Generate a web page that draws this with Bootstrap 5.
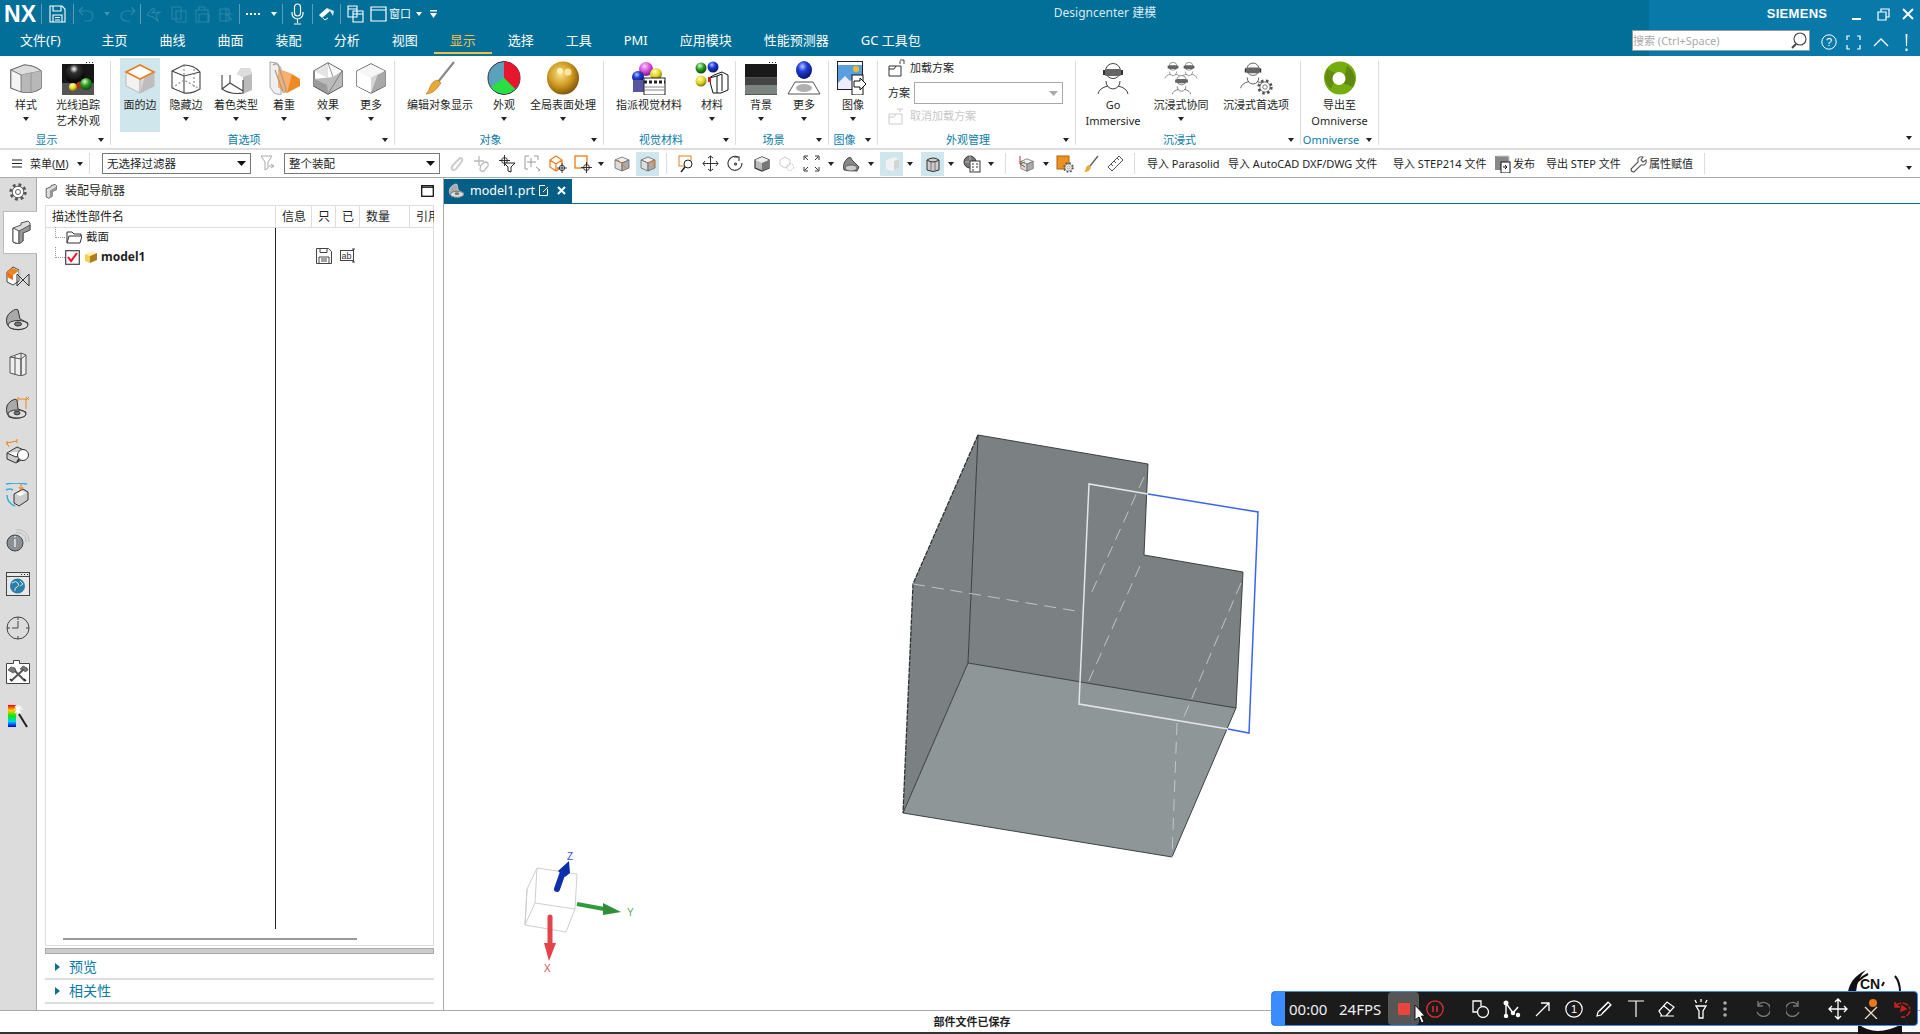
<!DOCTYPE html>
<html lang="zh-CN">
<head>
<meta charset="utf-8">
<title>Designcenter 建模</title>
<link href="https://cdn.jsdelivr.net/npm/bootstrap@5.3.0/dist/css/bootstrap.min.css" rel="stylesheet">
<style>
html,body{margin:0;height:100%;overflow:hidden;background:#fff}
body{font-family:"Noto Sans","Noto Sans CJK SC",sans-serif;font-size:11px;color:#1f1f1f;line-height:16px}
.app{width:1920px;height:1034px}
.cl{display:flex;align-items:center;justify-content:center;flex:none;white-space:nowrap}
.wd2{width:2px}.wd4{width:4px}.wd5{width:5px}.wd6{width:6px}.wd7{width:7px}.wd8{width:8px}.wd9{width:9px}.wd10{width:10px}.wd11{width:11px}.wd12{width:12px}.wd13{width:13px}.wd14{width:14px}.wd15{width:15px}.wd16{width:16px}.wd18{width:18px}.wd19{width:19px}.wd21{width:21px}.wd23{width:23px}.wd24{width:24px}.wd25{width:25px}.wd26{width:26px}.wd27{width:27px}.wd28{width:28px}.wd29{width:29px}.wd30{width:30px}.wd31{width:31px}.wd32{width:32px}.wd33{width:33px}.wd34{width:34px}.wd36{width:36px}.wd37{width:37px}.wd38{width:38px}.wd40{width:40px}.wd41{width:41px}.wd46{width:46px}.wd48{width:48px}.wd49{width:49px}.wd50{width:50px}.wd52{width:52px}.wd55{width:55px}.wd62{width:62px}.wd74{width:74px}.wd77{width:77px}.wd80{width:80px}.wd81{width:81px}.wd84{width:84px}.wd88{width:88px}.wd90{width:90px}.wd101{width:101px}.wd104{width:104px}.wd165{width:165px}.wd609{width:609px}
/* title bar */
.tbar{height:56px;flex:none;color:#fff;background:linear-gradient(90deg,#016f97 1649px,#0879a9 1649px)}
.trow{height:28px}
.nxl{font-family:"Liberation Sans",sans-serif;font-weight:700;font-size:23px;letter-spacing:.2px;justify-content:flex-start;padding-left:4px}
.tsep{width:1px;height:20px;background:#5a9cb8;flex:none}
.crw{width:0;height:0;border-left:3.5px solid transparent;border-right:3.5px solid transparent;border-top:4px solid #fff;display:block}
.crk{width:0;height:0;border-left:3.5px solid transparent;border-right:3.5px solid transparent;border-top:4px solid #222;display:block;flex:none}
.ttl{font-size:12px;color:#d7eaf2;padding-bottom:3px}
.smn{font-family:"Liberation Sans",sans-serif;font-weight:700;font-size:13px;letter-spacing:.3px}
.tabi{padding:0 16px;height:26px;line-height:25px;font-size:13px;color:#fff;white-space:nowrap;flex:none;border-bottom:2px solid transparent;margin-bottom:2px}
.tabi.first{margin-left:4px;padding-right:25px}
.tabi.on{color:#f5c04a;border-bottom-color:#f5c04a}
.srch{width:178px;height:21px;border:1px solid #999;background:#fff;position:relative;flex:none;margin-bottom:3px}
.srch input{border:0;outline:0;border-radius:0;width:100%;height:19px;padding:0;font-size:11px;background:transparent;font-family:inherit;color:#aaa;box-shadow:none}
.srch input::placeholder{color:#aaa}
.srch svg{position:absolute;right:2px;top:1px}
/* ribbon */
.rbn{height:94px;flex:none;border-bottom:2px solid #ddd;background:#fff}
.rgp{display:flex;flex-direction:column;flex:none;height:92px;position:relative;padding-right:1px}
.rgp::after{content:"";position:absolute;right:0;top:5px;width:1px;height:84px;background:#ddd}
.rgi{display:flex;height:76px;padding-top:2px;flex:none}
.rgi.p9{padding-left:9px}
.rbi{display:flex;flex-direction:column;align-items:center;flex:none;padding-top:3px;height:74px;white-space:nowrap;text-align:center}
.rbi svg{flex:none}
.rbi.act{background:#cfe6ec}
.rbl{margin-top:2px;line-height:16px}
.rbi .crk{margin-top:4px}
.rgf{display:flex;align-items:center;height:13px;color:#0b7ba8;margin-top:1.500px;flex:none}
.rgf span{flex:1;text-align:center;white-space:nowrap}
.rgf .crk{flex:none;margin:0 6px 0 5px}
.g7{width:198px}.g1{width:111px}.g2{width:284px}.g3{width:209px}.g4{width:132px}.g5{width:93px}.g6{width:49px}.g8{width:225px}.g9{width:78px}
.schm{padding:2px 0 0 10px;height:76px;flex:none}
.schr{height:20px}
.cmb{width:149px;height:22px;min-height:22px;padding:0 0 0 3px;border:1px solid #aaa;border-radius:0;font-size:11px;background-image:url("data:image/svg+xml,%3Csvg xmlns='http://www.w3.org/2000/svg' width='9' height='5'%3E%3Cpath d='M0 0h9L4.5 5z' fill='%23aaa'/%3E%3C/svg%3E");background-position:right 4px center;background-size:9px 5px;margin-left:4px}
.dis{color:#c8c8c8;margin-top:2px}
/* tool bar */
.tlb{height:28px;flex:none;border-bottom:1px solid #aaa;background:#fff}
.vsp{width:1px;height:21px;background:#ddd;flex:none}
.sel{height:21px;min-height:21px;padding:0 0 0 4px;border:1px solid #777;border-radius:0;font-size:11.5px;color:#222;background-image:url("data:image/svg+xml,%3Csvg xmlns='http://www.w3.org/2000/svg' width='9' height='5'%3E%3Cpath d='M0 0h9L4.5 5z' fill='%23111'/%3E%3C/svg%3E");background-position:right 4px center;background-size:9px 5px;flex:none;box-shadow:none}
.sel1{width:149px;margin-left:12px}.sel2{width:156px}
.hil{background:#cfe6ec;height:24px}
.mnu{padding-left:12px;justify-content:flex-start}
/* main */
.mainw{height:833px;flex:none;border-bottom:1px solid #aaa}
.sdb{width:37px;flex:none;background:#dcdcdc;border-right:1px solid #aaa;height:832px}
.sdi{height:44px;display:flex;align-items:center;justify-content:center}
.sdi.top{height:33px;padding-bottom:5px}
.sdi.act{height:43px;background:#fff;margin-left:3px;margin-right:-1px;border:1px solid #bbb;border-right:0;position:relative;padding-bottom:2px}
.pnl{width:407px;flex:none;border-right:1px solid #aaa;padding:0 9px 0 8px;height:832px}
.phd{height:27px;font-size:12px;padding-bottom:2px}
.tbx{height:741px;border:1px solid #ddd;flex:none}
.thd{height:21px;flex:none;border-bottom:1px solid #ddd;font-size:12px;box-sizing:content-box}
.thc{display:flex;align-items:center;padding-left:6px;border-right:1px solid #ddd;flex:none;overflow:hidden;white-space:nowrap}
.tc0{width:230px}.tc1{width:36px}.tc2{width:24px}.tc3{width:24px}.tc4{width:50px}.tc5{width:24px;border-right:0}
.tbd{height:701px;flex:none}
.tl{width:230px;border-right:1px solid #222;flex:none}
.trw{height:20px;font-size:11.5px;white-space:nowrap}
.trw:first-child{margin-top:-1px}
.dot{width:10px;height:11px;margin-left:9px;align-self:flex-start;border-left:1px dotted #999;border-bottom:1px dotted #999;flex:none}
.mdl{font-weight:700;font-size:12px;margin-left:3px}
.tir{padding:20px 0 0 40px;gap:8px}
.hsb{height:2px;width:294px;background:#999;margin:9px 0 0 17px}
.spl{height:6px;background:#ccc;border:1px solid #aaa;margin:2px 0;flex:none}
.sct{height:22px;padding-left:10px;font-size:14px;color:#0b7ba8;flex:none}
.sct i{width:0;height:0;border-top:4.5px solid transparent;border-bottom:4.5px solid transparent;border-left:5px solid #0a6f96;margin-right:9px;display:block}
.sln{height:2px;background:#ddd;flex:none}
.vwp{flex:1;min-width:0;height:832px}
.vtb{height:26px;flex:none;border-bottom:1px solid #046b95;padding-top:1px}
.vtab{width:128px;height:25px;background:#045e85;color:#fff;font-size:12.5px;padding-bottom:2px}
.cvs{display:block;flex:none}
.stbar{height:21px;flex:none;font-weight:700;padding-left:24px;background:#fff}
.btl{height:2px;background:#333;flex:none}
/* recorder */
.ink{position:absolute;left:1840px;top:962px}
.rec{position:absolute;left:1271px;top:991px;width:647px;height:35px;background:#1b1b1b;border:1px solid #3a8cff;border-radius:4px;color:#eee;font-size:15px}
.rbs{height:100%;background:#3a8cff;border-radius:3px 0 0 3px}
.rhl{height:33px;background:#565656;border-radius:4px}
.cur{position:absolute;left:1414px;top:1004px}
</style>
</head>
<body>
<svg width="0" height="0" class="position-absolute">
<defs>
<radialGradient id="gold" cx=".42" cy=".38" r=".65"><stop offset="0" stop-color="#f8e48c"/><stop offset=".55" stop-color="#d09a20"/><stop offset="1" stop-color="#7c5208"/></radialGradient>
<radialGradient id="blu" cx=".4" cy=".3" r=".7"><stop offset="0" stop-color="#b8c8ff"/><stop offset=".4" stop-color="#2040d8"/><stop offset="1" stop-color="#081070"/></radialGradient>
<radialGradient id="blk" cx=".45" cy=".25" r=".7"><stop offset="0" stop-color="#fff"/><stop offset=".3" stop-color="#333"/><stop offset="1" stop-color="#000"/></radialGradient>
<radialGradient id="grn" cx=".4" cy=".3" r=".7"><stop offset="0" stop-color="#d8ffc8"/><stop offset=".5" stop-color="#2c9a20"/><stop offset="1" stop-color="#0c4a0a"/></radialGradient>
<radialGradient id="ylw" cx=".4" cy=".3" r=".7"><stop offset="0" stop-color="#ffffb0"/><stop offset=".6" stop-color="#e0d020"/><stop offset="1" stop-color="#807000"/></radialGradient>
<radialGradient id="pnk" cx=".4" cy=".3" r=".7"><stop offset="0" stop-color="#ffc8ff"/><stop offset=".6" stop-color="#d040d0"/><stop offset="1" stop-color="#702080"/></radialGradient>
<linearGradient id="rbw" x1="0" y1="0" x2="0" y2="1"><stop offset="0" stop-color="#f00"/><stop offset=".25" stop-color="#fc0"/><stop offset=".5" stop-color="#0e0"/><stop offset=".75" stop-color="#0cf"/><stop offset="1" stop-color="#00c"/></linearGradient>
<symbol id="xh" viewBox="0 0 12 12"><circle cx="6" cy="6" r="3.2" fill="#fff" stroke="#222"/><path d="M6 0v12M0 6h12" stroke="#222" fill="none"/></symbol>
<symbol id="vrh" viewBox="0 0 34 34"><circle cx="17" cy="10" r="7.5" fill="#fff" stroke="#444"/><path d="M10 20q0 7 7 8q7-1 7-8" fill="#fff" stroke="#444"/><rect x="9" y="8" width="16" height="7" rx="1.5" fill="#666"/><rect x="7" y="9" width="2" height="5" fill="#333"/><rect x="25" y="9" width="2" height="5" fill="#333"/><path d="M2 33q1-6 10-8M32 33q-1-6-10-8" fill="none" stroke="#444"/></symbol>
<symbol id="gear" viewBox="0 0 20 20"><circle cx="10" cy="10" r="7.6" fill="none" stroke="#555" stroke-width="4" stroke-dasharray="3 3"/><circle cx="10" cy="10" r="6.4" fill="#fff" stroke="#555"/><circle cx="10" cy="10" r="2.8" fill="#fff" stroke="#555"/></symbol>
<symbol id="cube18" viewBox="0 0 18 18"><polygon points="2,5 9,2 16,5 9,8" fill="#eee" stroke="#666" stroke-width=".8"/><polygon points="2,5 9,8 9,16 2,13" fill="#ddd" stroke="#666" stroke-width=".8"/><polygon points="16,5 9,8 9,16 16,13" fill="#aaa" stroke="#666" stroke-width=".8"/></symbol>
</defs>
</svg>
<div class="app d-flex flex-column position-relative">

<!-- title bar -->
<header class="tbar">
 <div class="trow d-flex align-items-center">
  <div class="cl wd41 nxl">NX</div><span class="tsep"></span>
  <div class="cl wd31"><svg width="17" height="18" viewBox="0 0 17 18" fill="none" stroke="#fff" stroke-width="1.1"><path d="M1 1h12l3 3v13H1z"/><path d="M4 1v5h8V1M4 17v-7h9v7M6 12.5h5M6 15h5"/></svg></div><span class="tsep"></span>
  <div class="cl wd26"><svg width="18" height="16" viewBox="0 0 18 16" fill="none" stroke="#2d85a8" stroke-width="1.2"><path d="M5 1L1 5l4 4M1 5h9a5 5 0 0 1 0 10H6"/></svg></div><div class="cl wd13"><span class="crw opacity-25"></span></div>
  <div class="cl wd27"><svg width="18" height="16" viewBox="0 0 18 16" fill="none" stroke="#2d85a8" stroke-width="1.2"><path d="M13 1l4 4-4 4M17 5H8a5 5 0 0 0 0 10h4"/></svg></div><span class="tsep"></span>
  <div class="cl wd26"><svg width="16" height="16" viewBox="0 0 16 16" fill="none" stroke="#2d85a8" stroke-width="1.1"><path d="M1 9l6-7 2 2-3 3 8-1-4 3 2 6-5-4z"/></svg></div>
  <div class="cl wd23"><svg width="16" height="17" viewBox="0 0 16 17" fill="none" stroke="#2d85a8" stroke-width="1.1"><path d="M1 1h9v12H1zM5 5h10v11H5z"/></svg></div>
  <div class="cl wd23"><svg width="16" height="17" viewBox="0 0 16 17" fill="none" stroke="#2d85a8" stroke-width="1.1"><path d="M2 4h12v12H2zM5 4V1h6v3M5 8h10v8H5z"/></svg></div>
  <div class="cl wd26"><svg width="16" height="17" viewBox="0 0 16 17" fill="none" stroke="#2d85a8" stroke-width="1.1"><path d="M2 3h9v12H2zM8 1v15M1 8h14M8 8l6 6"/></svg></div><span class="tsep"></span>
  <div class="cl wd26"><svg width="15" height="2" viewBox="0 0 15 2" fill="#fff"><path d="M0 0h2v2H0zM4 0h2v2H4zM8 0h2v2H8zM12 0h2v2h-2z"/></svg></div><div class="cl wd16"><span class="crw"></span></div><span class="tsep"></span>
  <div class="cl wd29"><svg width="13" height="22" viewBox="0 0 13 22" fill="none" stroke="#fff" stroke-width="1.2"><rect x="3.5" y="1" width="6" height="12" rx="3"/><path d="M1 9v1.5a5.5 5.5 0 0 0 11 0V9M6.5 16v4M3 21h7"/></svg></div><span class="tsep"></span>
  <div class="cl wd27"><svg width="17" height="14" viewBox="0 0 17 14"><path d="M1 8l8-7 3 3-8 7z" fill="#fff"/><path d="M9 1l7 3-1 5-3-5z" fill="#cfe6ec"/><path d="M5 11l2 2 3-2" fill="none" stroke="#fff"/></svg></div><span class="tsep"></span>
  <div class="cl wd28"><svg width="17" height="18" viewBox="0 0 17 18" fill="none" stroke="#fff" stroke-width="1.1"><path d="M1 1h9v11H1zM1 4h9M6 6h10v11H6zM6 9h10"/></svg></div>
  <div class="cl wd19"><svg width="17" height="16" viewBox="0 0 17 16" fill="none" stroke="#fff" stroke-width="1.2"><path d="M1 1h15v14H1zM1 4h15"/></svg></div>
  <div class="cl wd24">窗口</div><div class="cl wd14"><span class="crw"></span></div>
  <div class="cl wd14"><svg width="7" height="8" viewBox="0 0 7 8" fill="#fff"><path d="M0 0h7v1.4H0zM0 3h7L3.5 8z"/></svg></div>
  <div class="flex-grow-1"></div>
  <div class="cl wd104 ttl">Designcenter 建模</div>
  <div class="cl wd609"></div>
  <div class="cl wd62 smn">SIEMENS</div>
  <div class="cl wd13"></div>
  <div class="cl wd30"><svg width="9" height="11" viewBox="0 0 9 11"><rect y="9" width="9" height="2" fill="#fff"/></svg></div>
  <div class="cl wd25"><svg width="13" height="13" viewBox="0 0 13 13" fill="none" stroke="#fff" stroke-width="1.2"><path d="M1 4h8v8H1zM4 4V1h8v8H9"/></svg></div>
  <div class="cl wd24"><svg width="12" height="12" viewBox="0 0 12 12" stroke="#fff" stroke-width="1.8"><path d="M1 1l10 10M11 1L1 11"/></svg></div>
 </div>
 <div class="trow d-flex align-items-center">
  <div class="tabi first">文件(F)</div>
  <div class="tabi">主页</div><div class="tabi">曲线</div><div class="tabi">曲面</div><div class="tabi">装配</div><div class="tabi">分析</div><div class="tabi">视图</div><div class="tabi on">显示</div><div class="tabi">选择</div><div class="tabi">工具</div><div class="tabi">PMI</div><div class="tabi">应用模块</div><div class="tabi">性能预测器</div><div class="tabi">GC 工具包</div>
  <div class="srch ms-auto"><input class="form-control" placeholder="搜索 (Ctrl+Space)" aria-label="搜索"><svg width="17" height="18" viewBox="0 0 17 18" fill="none" stroke="#444" stroke-width="1.1"><circle cx="10" cy="7" r="6"/><path d="M6 12l-4 4" stroke-width="2"/></svg></div>
  <div class="cl wd6"></div>
  <div class="cl wd18 ms-1"><svg width="16" height="16" viewBox="0 0 16 16"><circle cx="8" cy="8" r="7.2" fill="none" stroke="#fff"/><text x="8" y="12" font-size="11" text-anchor="middle" fill="#fff" font-family="Liberation Sans">?</text></svg></div>
  <div class="cl wd31"><svg width="15" height="15" viewBox="0 0 15 15" fill="none" stroke="#fff" stroke-width="1.2"><path d="M1 5V1h3M11 1h3v4M14 10v4h-3M4 14H1v-4"/></svg></div>
  <div class="cl wd23"><svg width="16" height="9" viewBox="0 0 16 9" fill="none" stroke="#fff" stroke-width="1.3"><path d="M1 8l7-7 7 7"/></svg></div>
  <div class="cl wd28"><svg width="3" height="17" viewBox="0 0 3 17" fill="#fff"><path d="M.6 0h1.8L2 12H1zM.5 14.500h2v2.500h-2z"/></svg></div>
 </div>
</header>

<!-- ribbon -->
<section class="rbn d-flex">
 <div class="rgp g1"><div class="rgi">
  <div class="rbi wd52"><svg width="34" height="34" viewBox="0 0 34 34"><path d="M2 9l13-5q10 0 17 6v17q-8 6-19 4l-11-4z" fill="#e6e6e6" stroke="#444" stroke-width="1.2"/><path d="M2 9l10 5q10-2 20-4q-7-6-17-6z" fill="#ddd" stroke="#666" stroke-width=".7"/><path d="M12 14q10-2 20-4v17q-8 6-19 4z" fill="#b8b8b8"/><path d="M12 14v17M22 12v19" stroke="#888" fill="none" stroke-width=".7"/><path d="M2 9l10 5v17l-10-4z" fill="#f4f4f4" stroke="#666" stroke-width=".7"/></svg><div class="rbl">样式</div><span class="crk"></span></div>
  <div class="rbi wd52"><svg width="34" height="34" viewBox="0 0 32 34"><rect width="32" height="34" fill="#555"/><rect y="0" width="32" height="3" fill="#fff"/><path d="M24 1.500h1M27 1.500h1M30 1.500h1" stroke="#222"/><rect y="3" width="32" height="19" fill="#161616"/><circle cx="13" cy="13" r="10" fill="url(#blk)"/><circle cx="11" cy="26" r="4" fill="url(#ylw)"/><circle cx="18" cy="24" r="3.500" fill="#b03020"/><circle cx="24" cy="23" r="6" fill="url(#grn)"/></svg><div class="rbl">光线追踪<br>艺术外观</div></div>
 </div><div class="rgf"><span>显示</span><i class="crk"></i></div></div>

 <div class="rgp g2"><div class="rgi p9">
  <div class="rbi wd40 act"><svg width="34" height="34" viewBox="0 0 34 34"><polygon points="3,11 17,18 17,32 3,25" fill="#f2f2f2" stroke="#bbb"/><polygon points="31,11 17,18 17,32 31,25" fill="#dadada" stroke="#bbb"/><polygon points="31,11 31,25 17,32 22,15" fill="#bdbdbd"/><polygon points="3,11 17,4 31,11 17,18" fill="#fff" stroke="#ec7d1a" stroke-width="1.6"/></svg><div class="rbl">面的边</div></div>
  <div class="rbi wd52"><svg width="34" height="34" viewBox="0 0 34 34" fill="none" stroke="#444" stroke-width="1.1"><path d="M3 10l12-6q10 0 16 7v17q-8 5-16 4L3 27z" fill="#fff"/><path d="M3 10l12 5 16-4M15 15v17"/><path d="M15 4v12M3 27l12-8 16 9M25 8v20" stroke-dasharray="2 2" stroke="#888"/></svg><div class="rbl">隐藏边</div><span class="crk"></span></div>
  <div class="rbi wd48"><svg width="34" height="34" viewBox="0 0 34 34"><path d="M18 13l4-6h9l2 6v16l-9 4v-17z" fill="#bbb"/><path d="M18 13l4-6h9l2 6-9 3z" fill="#ddd"/><path d="M3 14v14q9 6 21 4v-13M3 28l8-6 13 8M11 22V14" fill="none" stroke="#444" stroke-width="1.1"/></svg><div class="rbl">着色类型</div><span class="crk"></span></div>
  <div class="rbi wd48"><svg width="34" height="34" viewBox="0 0 34 34"><path d="M3 1l7 1 4 5v27l-7-2-4-6z" fill="#efefef" stroke="#aaa"/><polygon points="11,8 25,13 33,18 33,25 20,32 11,26" fill="#ee8a24"/><polygon points="11,8 25,13 20,32 11,26" fill="#f6b072"/><path d="M6 4q4-3 6 2l7 22q0 4-3 3l-8-22" fill="none" stroke="#a89888" stroke-width="1.2"/></svg><div class="rbl">着重</div><span class="crk"></span></div>
  <div class="rbi wd40"><svg width="34" height="34" viewBox="0 0 34 34"><polygon points="3,10 17,2 31,10 31,25 17,33 3,25" fill="#fff" stroke="#444" stroke-width="1.3"/><polygon points="3,10 17,2 17,17" fill="#e4e4e4"/><polygon points="17,2 31,10 22,16" fill="#fafafa"/><polygon points="3,18 22,16 31,10 31,25 17,33" fill="#bbb"/><polygon points="17,33 3,25 3,18 16,24" fill="#9a9a9a"/><path d="M17 2l5 14M31 10L17 33" stroke="#666" fill="none" stroke-width=".7"/></svg><div class="rbl">效果</div><span class="crk"></span></div>
  <div class="rbi wd46"><svg width="34" height="34" viewBox="0 0 34 34"><polygon points="3,10 17,3 31,10 31,25 17,32 3,25" fill="#e8e8e8" stroke="#444" stroke-width="1.2"/><polygon points="3,10 17,3 31,10 17,17" fill="#f6f6f6"/><polygon points="17,17 31,10 31,25 17,32" fill="#a8a8a8"/><polygon points="3,10 17,17 17,32 3,25" fill="#fff"/><polygon points="17,17 24,13 17,32" fill="#d4d4d4"/></svg><div class="rbl">更多</div><span class="crk"></span></div>
 </div><div class="rgf"><span>首选项</span><i class="crk"></i></div></div>

 <div class="rgp g3"><div class="rgi">
  <div class="rbi wd90"><svg width="34" height="34" viewBox="0 0 34 34"><path d="M31 1L15 21" stroke="#8a8a8a" stroke-width="2.2"/><path d="M15 19l3 3-3 4q-5 7-12 7q3-3 4-7q2-6 8-7z" fill="#e8a838" stroke="#a87418" stroke-width=".6"/></svg><div class="rbl">编辑对象显示</div></div>
  <div class="rbi wd38"><svg width="34" height="34" viewBox="0 0 34 34"><ellipse cx="17" cy="17" rx="16" ry="16.500" fill="#5ba1bc" stroke="#333"/><path d="M17 17V.5A16 16.500 0 0 1 33 17q0 6-5 11z" fill="#e8162c"/><path d="M17 17L28 28A16 16.500 0 0 1 4 26z" fill="#28e040"/></svg><div class="rbl">外观</div><span class="crk"></span></div>
  <div class="rbi wd80"><svg width="34" height="34" viewBox="0 0 34 34"><ellipse cx="17" cy="17" rx="16" ry="16.500" fill="url(#gold)"/><circle cx="14" cy="10" r="3" fill="#fff3b8"/><circle cx="22" cy="11" r="3.500" fill="#fff3b8" opacity=".8"/></svg><div class="rbl">全局表面处理</div><span class="crk"></span></div>
 </div><div class="rgf"><span>对象</span><i class="crk"></i></div></div>

 <div class="rgp g4"><div class="rgi">
  <div class="rbi wd90"><svg width="34" height="34" viewBox="0 0 34 34"><circle cx="14" cy="8" r="7" fill="url(#pnk)"/><circle cx="24" cy="13" r="6" fill="url(#ylw)"/><circle cx="6" cy="16" r="6" fill="url(#blu)"/><rect x="1" y="19" width="32" height="12" fill="#5856a0"/><rect x="12" y="17" width="21" height="17" fill="#fff" stroke="#222"/><path d="M12 21h21" stroke="#222" stroke-width="3" stroke-dasharray="3 2"/><path d="M12 26h21M12 29h21" stroke="#888"/></svg><div class="rbl">指派视觉材料</div></div>
  <div class="rbi wd36"><svg width="34" height="34" viewBox="0 0 34 34"><circle cx="6" cy="7" r="5.500" fill="url(#grn)"/><circle cx="18" cy="6" r="5.500" fill="url(#blu)"/><circle cx="6" cy="20" r="5.500" fill="url(#ylw)"/><path d="M14 17l4 15h8l7-3V14l-6-3-8 3z" fill="#fff" stroke="#111"/><path d="M22 15v17M27 13v17M14 17l8-2 5-2" fill="none" stroke="#111"/><rect x="13" y="16" width="3" height="5" fill="#d02020"/></svg><div class="rbl">材料</div><span class="crk"></span></div>
 </div><div class="rgf"><span>视觉材料</span><i class="crk"></i></div></div>

 <div class="rgp g5"><div class="rgi">
  <div class="rbi wd50"><svg width="34" height="34" viewBox="0 0 32 34"><rect width="32" height="34" fill="#555"/><rect width="32" height="3" fill="#fff"/><path d="M24 1.500h1M27 1.500h1M30 1.500h1" stroke="#222"/><rect y="3" width="32" height="13" fill="#191919"/><rect y="17" width="32" height="7" fill="#444"/><rect y="24" width="32" height="9" fill="#7c8480"/></svg><div class="rbl">背景</div><span class="crk"></span></div>
  <div class="rbi wd36"><svg width="34" height="34" viewBox="0 0 34 34"><ellipse cx="17" cy="9" rx="8" ry="9" fill="url(#blu)"/><path d="M8 21h18l7 12H1z" fill="#fff" stroke="#555"/><ellipse cx="17" cy="27" rx="8" ry="4" fill="#b0b0b0"/></svg><div class="rbl">更多</div><span class="crk"></span></div>
 </div><div class="rgf"><span>场景</span><i class="crk"></i></div></div>

 <div class="rgp g6"><div class="rgi">
  <div class="rbi wd48"><svg width="34" height="34" viewBox="0 0 32 34"><rect x=".5" y=".5" width="25" height="28" fill="#5aa0e0" stroke="#222"/><rect x="1" y="1" width="24" height="3" fill="#fff"/><circle cx="19" cy="8" r="3" fill="#f0c020"/><path d="M1 22l7-7 5 5 5-3 7 6v5H1z" fill="#eef"/><rect x="15" y="14" width="11" height="20" fill="#fff" stroke="#111"/><path d="M17 20h6v-3l6 6-6 6v-3h-6z" fill="#fff" stroke="#111"/></svg><div class="rbl">图像</div><span class="crk"></span></div>
 </div><div class="rgf"><span>图像</span><i class="crk"></i></div></div>

 <div class="rgp g7">
  <div class="schm d-flex flex-column">
   <div class="d-flex align-items-center schr"><svg width="18" height="18" viewBox="0 0 18 18" fill="none" stroke="#333" class="me-1"><path d="M1 7h12v10H1zM1 10h5l2-3"/><path d="M12 5V2M12 1l4 0M16 1l0 4" stroke-width=".9"/></svg><span>加载方案</span></div>
   <div class="d-flex align-items-center mt-1"><span>方案</span><select class="form-select cmb" aria-label="方案"><option></option></select></div>
   <div class="d-flex align-items-center schr dis"><svg width="18" height="18" viewBox="0 0 18 18" fill="none" stroke="#ccc" class="me-1"><path d="M1 7h13v10H1zM1 10h5l2-3"/><path d="M12 5V2M9 2h6"/></svg><span>取消加载方案</span></div>
  </div>
  <div class="rgf"><span>外观管理</span><i class="crk"></i></div>
 </div>

 <div class="rgp g8"><div class="rgi">
  <div class="rbi wd74"><svg width="34" height="34"><use href="#vrh"/></svg><div class="rbl">Go<br>Immersive</div></div>
  <div class="rbi wd62"><svg width="34" height="34" viewBox="0 0 34 34"><use href="#vrh" x="0" y="0" width="18" height="18"/><use href="#vrh" x="16" y="0" width="18" height="18"/><use href="#vrh" x="7" y="13" width="21" height="21"/></svg><div class="rbl">沉浸式协同</div><span class="crk"></span></div>
  <div class="rbi wd88"><svg width="34" height="34" viewBox="0 0 34 34"><use href="#vrh" width="28" height="28"/><use href="#gear" x="18" y="18" width="16" height="16"/></svg><div class="rbl">沉浸式首选项</div></div>
 </div><div class="rgf"><span>沉浸式</span><i class="crk"></i></div></div>

 <div class="rgp g9"><div class="rgi">
  <div class="rbi wd77"><svg width="34" height="34" viewBox="0 0 34 34"><ellipse cx="17" cy="17" rx="16" ry="16.500" fill="#74ad0c"/><path d="M24 5A16 16 0 0 1 30 26L20 22z" fill="#5b7d12" opacity=".8"/><path d="M8 28A16 16 0 0 1 4 8l10 5z" fill="#5b7d12" opacity=".7"/><circle cx="16" cy="17.500" r="6.500" fill="#fff"/></svg><div class="rbl">导出至<br>Omniverse</div></div>
 </div><div class="rgf"><span>Omniverse</span><i class="crk"></i></div></div>
 <div class="flex-grow-1 d-flex justify-content-end align-items-end pe-2 pb-2"><i class="crk"></i></div>
</section>

<!-- command bar -->
<nav class="tlb d-flex align-items-center">
 <div class="cl wd30 mnu"><svg width="10" height="9" viewBox="0 0 10 9" stroke="#222"><path d="M0 1h10M0 4.500h10M0 8h10"/></svg></div>
 <div class="cl wd40 justify-content-start">菜单(<u>M</u>)</div>
 <div class="cl wd19"><span class="crk"></span></div><span class="vsp"></span>
 <select class="form-select sel sel1" aria-label="过滤器"><option>无选择过滤器</option></select>
 <div class="cl wd33"><svg width="16" height="17" viewBox="0 0 16 17" fill="none" stroke="#aaa"><path d="M1 1h11L8 7v6L5 15V7zM11 9l3 2-3 2M14 11H9" /></svg></div>
 <select class="form-select sel sel2" aria-label="范围"><option>整个装配</option></select>
 <div class="cl wd5"></div>
 <div class="cl wd24"><svg width="16" height="18" viewBox="0 0 16 18" fill="none" stroke="#ccc" stroke-width="2"><path d="M5 9l6-6q3 0 2 3L7 14q-3 2-4 0q-1-2 2-5"/></svg></div>
 <div class="cl wd26"><svg width="18" height="18" viewBox="0 0 18 18" fill="none" stroke="#bbb" stroke-width="1.300"><path d="M6 1v10M1 6h10"/><path d="M8 10l4-3q4 0 3 4l-4 5q-4 1-4-2z"/></svg></div>
 <div class="cl wd24"><svg width="18" height="18" viewBox="0 0 18 18"><use href="#xh" width="11" height="11" x="1"/><path d="M6 8h11l-4 4v5l-3-1v-4z" fill="#fff" stroke="#222"/></svg></div>
 <div class="cl wd26"><svg width="17" height="17" viewBox="0 0 17 17" fill="none" stroke="#999"><path d="M5 1H1v13h3M10 1h4v4M7 3v9M3 7h9M12 12l4 3-2 1" /></svg></div>
 <div class="cl wd26"><svg width="18" height="18" viewBox="0 0 18 18"><path d="M1 5l6-4 6 4v7l-6 4-6-4zM1 5l6 4 6-4M7 9v7" fill="none" stroke="#ee7a14" stroke-width="1.200"/><use href="#xh" x="8" y="8" width="10" height="10"/></svg></div>
 <div class="cl wd24"><svg width="18" height="18" viewBox="0 0 18 18"><rect x="1" y="1" width="12" height="12" fill="none" stroke="#ee7a14" stroke-width="1.300"/><use href="#xh" x="7" y="7" width="11" height="11"/></svg></div>
 <div class="cl wd12"><span class="crk"></span></div>
 <div class="cl wd29"><svg width="18" height="18"><use href="#cube18"/><path d="M5 5l8 8" stroke="#ee7a14"/></svg></div>
 <div class="cl wd23 hil"><svg width="18" height="18"><use href="#cube18"/><path d="M9 8l6-3v8" stroke="#ee7a14" fill="none"/></svg></div>
 <div class="cl wd7"></div><span class="vsp"></span><div class="cl wd8"></div>
 <div class="cl wd24"><svg width="18" height="18" viewBox="0 0 18 18" fill="none"><rect x="1" y="1" width="12" height="10" stroke="#ee7a14"/><circle cx="10" cy="9" r="4" fill="#fff" stroke="#222"/><path d="M7 12l-4 5" stroke="#222" stroke-width="1.500"/></svg></div>
 <div class="cl wd23"><svg width="17" height="17" viewBox="0 0 17 17" fill="none" stroke="#333"><path d="M8.500 1v15M1 8.500h15M6 3l2.500-2L11 3M6 14l2.500 2 2.500-2M3 6L1 8.500 3 11M14 6l2 2.500L14 11"/></svg></div>
 <div class="cl wd27"><svg width="17" height="17" viewBox="0 0 17 17" fill="none" stroke="#333" stroke-width="1.100"><path d="M11 2A7 7 0 1 0 15 8"/><path d="M7 2h5v4"/><circle cx="8.500" cy="9" r="1"/></svg></div>
 <div class="cl wd25"><svg width="18" height="18" viewBox="0 0 18 18"><polygon points="2,5 9,2 16,5 16,13 9,16 2,13" fill="#bbb" stroke="#333" stroke-width="1.200"/><polygon points="2,5 9,2 16,5 9,8" fill="#eee"/><polygon points="9,8 16,5 16,13 9,16" fill="#777"/></svg></div>
 <div class="cl wd25"><svg width="17" height="17" viewBox="0 0 17 17" fill="none" stroke="#ccc"><path d="M2 5l5-3 5 3v5l-5 3-5-3z"/><circle cx="12" cy="12" r="3.500" stroke-dasharray="2 1"/></svg></div>
 <div class="cl wd24"><svg width="17" height="17" viewBox="0 0 17 17" fill="none" stroke="#333"><path d="M1 5V1h4M12 1h4v4M16 12v4h-4M5 16H1v-4M2 2l3 3M15 2l-3 3M15 15l-3-3M2 15l3-3"/></svg></div>
 <div class="cl wd15"><span class="crk"></span></div>
 <div class="cl wd26"><svg width="18" height="16" viewBox="0 0 18 16"><path d="M2 14q-2-7 4-12q3-2 4 2l7 7-2 4z" fill="#888" stroke="#444"/><ellipse cx="9" cy="12" rx="6" ry="3" fill="#ccc" stroke="#444" stroke-width=".7"/></svg></div>
 <div class="cl wd14"><span class="crk"></span></div><div class="cl wd2"></div>
 <div class="cl wd23 hil"><svg width="18" height="18" viewBox="0 0 18 18"><polygon points="3,5 11,2 16,4 16,13 9,16 3,14" fill="#f2f2f2" opacity=".95"/><polygon points="11,6 16,4 16,13 11,15" fill="#d4d4d4"/></svg></div>
 <div class="cl wd14"><span class="crk"></span></div><div class="cl wd4"></div>
 <div class="cl wd23 hil"><svg width="18" height="18" viewBox="0 0 18 18"><path d="M3 5q6-4 12 0v10q-6 3-12 0z" fill="#ccc" stroke="#333"/><path d="M3 5q6 4 12 0" fill="none" stroke="#333"/><path d="M7 7v10M11 7v10" stroke="#777"/></svg></div>
 <div class="cl wd14"><span class="crk"></span></div>
 <div class="cl wd28"><svg width="18" height="18" viewBox="0 0 18 18"><circle cx="7" cy="7" r="6" fill="#777" stroke="#333"/><path d="M2 7h10M7 1v12" stroke="#ddd" stroke-width=".7"/><rect x="7" y="6" width="10" height="11" fill="#fff" stroke="#333"/><path d="M9 9h2M13 9h2M9 12h2M13 12h2M9 15h2" stroke="#333"/></svg></div>
 <div class="cl wd10"><span class="crk"></span></div>
 <div class="cl wd9"></div><span class="vsp"></span><div class="cl wd6"></div>
 <div class="cl wd27"><svg width="18" height="18" viewBox="0 0 18 18"><use href="#cube18" y="2" x="2" width="16" height="16"/><path d="M3 1v8l5 3" stroke="#d02030" fill="none"/><path d="M3 9l5-2" stroke="#20a040"/></svg></div>
 <div class="cl wd13"><span class="crk"></span></div>
 <div class="cl wd26"><svg width="18" height="18" viewBox="0 0 18 18"><rect x="1" y="1" width="12" height="13" fill="#ee9020" stroke="#b06010"/><use href="#gear" x="7" y="7" width="11" height="11"/></svg></div>
 <div class="cl wd25"><svg width="18" height="18" viewBox="0 0 18 18"><path d="M16 1L8 11" stroke="#666" stroke-width="1.500"/><path d="M7 10l2 2q-1 5-7 5q2-2 2-4t3-3z" fill="#e8a838"/></svg></div>
 <div class="cl wd24"><svg width="17" height="17" viewBox="0 0 17 17" fill="#fff" stroke="#555"><path d="M1 12L12 1l4 4L5 16z"/><path d="M4 9l2 2M7 6l2 2M10 3l2 2" fill="none"/></svg></div>
 <div class="cl wd7"></div><span class="vsp"></span><div class="cl wd12"></div>
 <div class="cl wd81 justify-content-start">导入 Parasolid</div>
 <div class="cl wd165 justify-content-start">导入 AutoCAD DXF/DWG 文件</div>
 <div class="cl wd101 justify-content-start">导入 STEP214 文件</div>
 <div class="cl wd19 justify-content-start"><svg width="17" height="18" viewBox="0 0 17 18"><rect x="1" y="1" width="14" height="14" fill="#888"/><path d="M3 1h12v12" fill="none" stroke="#ccc"/><rect x="7" y="7" width="9" height="11" fill="#fff" stroke="#111"/><path d="M9 12h3M11 10l2 2-2 2" fill="none" stroke="#111"/></svg></div>
 <div class="cl wd33 justify-content-start">发布</div>
 <div class="cl wd84 justify-content-start">导出 STEP 文件</div>
 <div class="cl wd19 justify-content-start"><svg width="17" height="18" viewBox="0 0 17 18" fill="#fff" stroke="#555" stroke-width="1.100"><path d="M16 5l-3 2-2-2 2-3q-4-1-5 2v3L1 14q0 3 3 3l7-7h3q3-1 2-5z"/></svg></div>
 <div class="cl wd55 justify-content-start">属性赋值</div>
 <span class="vsp"></span>
 <div class="ms-auto pe-2 pt-2 d-flex"><i class="crk"></i></div>
</nav>

<!-- main -->
<main class="mainw d-flex">
 <aside class="sdb d-flex flex-column">
  <div class="sdi top"><svg width="18" height="18"><use href="#gear" width="18" height="18"/></svg></div>
  <div class="sdi act"><svg width="20" height="24" viewBox="0 0 20 24"><polygon points="2,8 10,5 10,3 17,1 19,3 19,10 12,13 12,21 6,24 2,22" fill="#ddd" stroke="#555"/><polygon points="2,8 8,11 8,24 2,22" fill="#fff" stroke="#555"/><polygon points="8,11 12,9 19,5 19,10 12,13 12,21 8,24" fill="#999" stroke="#555"/></svg></div>
  <div class="sdi"><svg width="26" height="26" viewBox="0 0 26 26"><polygon points="2,9 8,4 14,7 14,18 8,22 2,19" fill="#fff" stroke="#444"/><polygon points="2,8 8,5 14,8 8,12" fill="#ee8420"/><polygon points="2,8 8,12 8,17 2,14" fill="#ee7010"/><polygon points="14,7 16,5 16,13 14,14" fill="#ccc"/><path d="M12 11l12 12M24 11L12 23M12 11v12M24 11v12" fill="#fff" stroke="#333"/></svg></div>
  <div class="sdi"><svg width="26" height="24" viewBox="0 0 26 24"><path d="M2 16q-2-8 4-12q5-4 7-2l2 9 8 4-1 4q-8 5-17 1z" fill="#aaa" stroke="#333"/><ellipse cx="13" cy="17" rx="10" ry="4.500" fill="#ddd" stroke="#333"/><ellipse cx="13" cy="16" rx="3.500" ry="2" fill="#777" stroke="#333"/></svg></div>
  <div class="sdi"><svg width="20" height="24" viewBox="0 0 20 24" fill="#eee" stroke="#555"><path d="M2 5l11-4 5 2v19l-5 2-11-3z"/><path d="M7 4v19M13 1v23M2 5l11 2 5-4M13 7v17" fill="none"/></svg></div>
  <div class="sdi"><svg width="26" height="26" viewBox="0 0 26 26"><path d="M2 18q-2-8 4-12q4-3 6-1l1 9 8 3-1 4q-8 4-16 1z" fill="#aaa" stroke="#333"/><ellipse cx="12" cy="19" rx="9" ry="4" fill="#ddd" stroke="#333"/><ellipse cx="12" cy="18" rx="3" ry="1.800" fill="#777" stroke="#333"/><path d="M13 4h9M21 14V4M13 2v4M21 2l3 3M24 2l-3 3" stroke="#ee8420" fill="none"/></svg></div>
  <div class="sdi"><svg width="26" height="26" viewBox="0 0 26 26"><path d="M2 14l10-6 9 4v6l-10 6-9-4z" fill="#ccc" stroke="#333"/><path d="M2 14l9 4 10-6" fill="#fff" stroke="#333"/><circle cx="18" cy="16" r="5.500" fill="#fff" stroke="#333"/><path d="M14 20l-2 3" stroke="#333" stroke-width="1.500"/><path d="M2 4l10-2M2 2v4M12 0v4M4 8l-2-4" stroke="#ee8420" fill="none"/></svg></div>
  <div class="sdi"><svg width="26" height="26" viewBox="0 0 26 26"><path d="M9 11l9-5 5 3v8l-9 6-5-3z" fill="#ccc" stroke="#333"/><path d="M11 11l6-3 4 2-6 3z" fill="#fff"/><path d="M1 1q10-2 21 0M1 7q4-2 7 0M2 12q0 8 8 11" fill="none" stroke="#2ab0e0" stroke-width="1.400"/><path d="M16 1v5m-2-2l2 3 2-3" stroke="#ee7a14" fill="none"/></svg></div>
  <div class="sdi"><svg width="24" height="24" viewBox="0 0 24 24"><path d="M10 2a11 11 0 0 1 13 12M10 5a8 8 0 0 1 10 9" fill="none" stroke="#bbb"/><circle cx="9" cy="15" r="8" fill="#8a9093" stroke="#444"/><path d="M9 11v8M9 8v1.500" stroke="#fff" stroke-width="1.200"/></svg></div>
  <div class="sdi"><svg width="24" height="24" viewBox="0 0 24 24"><rect x=".5" y=".5" width="23" height="23" fill="#e8e8e8" stroke="#444"/><path d="M.5 4.500h23" stroke="#444"/><path d="M15 2.500h1M18 2.500h1M21 2.500h1" stroke="#222"/><circle cx="11.500" cy="14" r="7.500" fill="#2a7fa8"/><path d="M6 11q4-3 6 0t-1 4q-3 1-2 4M14 9l3 3-3 2" stroke="#cfe6f2" fill="none"/></svg></div>
  <div class="sdi"><svg width="24" height="24" viewBox="0 0 24 24" fill="none" stroke="#444"><circle cx="12" cy="12" r="11"/><path d="M12 1v3M12 20v3M1 12h3M20 12h3M12 5v7H6"/></svg></div>
  <div class="sdi"><svg width="24" height="24" viewBox="0 0 24 24"><path d="M.5 3.500h7V.5h6v3h10v20H.5z" fill="#fff" stroke="#444"/><path d="M5 21L18 9M19 21L8 10" stroke="#555" stroke-width="2"/><path d="M2 10l3-3 4 1 1 3-3 2zM14 9l3-3 4 2 1 2-3 2-1-2z" fill="#777" stroke="#333" stroke-width=".6"/><path d="M4 19l2 2M18 19l2 2" stroke="#222" stroke-width="1.500"/></svg></div>
  <div class="sdi"><svg width="22" height="24" viewBox="0 0 22 24"><rect x="1" y="1" width="8" height="22" fill="url(#rbw)"/><path d="M12 10l8 13" stroke="#222" stroke-width="2"/><path d="M11 1v9M7 5h9M8 2l6 7M14 2L8 9" stroke="#fff" stroke-width="1.200"/></svg></div>
 </aside>

 <div class="pnl d-flex flex-column">
  <div class="phd d-flex align-items-center">
   <svg width="12" height="16" viewBox="0 0 20 24" class="me-2"><polygon points="2,8 10,5 10,3 17,1 19,3 19,10 12,13 12,21 6,24 2,22" fill="#ddd" stroke="#555" stroke-width="1.500"/><polygon points="8,11 19,5 19,10 12,13 12,21 8,24" fill="#999"/></svg>
   <span class="flex-grow-1">装配导航器</span>
   <svg width="13" height="12" viewBox="0 0 13 12" fill="none" stroke="#111"><rect x=".7" y=".7" width="11.600" height="10.600" stroke-width="1.300"/><path d="M0 2.200h13" stroke-width="1.300"/></svg>
  </div>
  <div class="tbx d-flex flex-column">
   <div class="thd d-flex">
    <div class="thc tc0">描述性部件名</div><div class="thc tc1">信息</div><div class="thc tc2">只</div><div class="thc tc3">已</div><div class="thc tc4">数量</div><div class="thc tc5">引用</div>
   </div>
   <div class="tbd d-flex">
    <div class="tl">
     <div class="trw d-flex align-items-center"><span class="dot"></span><svg width="17" height="13" viewBox="0 0 17 13" fill="#fff" stroke="#333" class="me-1"><path d="M2 12V1h5l2 2h7v2"/><path d="M2 12L4 5h13l-2 7z"/></svg><span>截面</span></div>
     <div class="trw d-flex align-items-center"><span class="dot"></span><svg width="15" height="15" viewBox="0 0 15 15" class="me-1"><rect x=".7" y=".7" width="13.600" height="13.600" fill="#fff" stroke="#444" stroke-width="1.200"/><path d="M3 7l3 4 6-8" fill="none" stroke="#e8132b" stroke-width="2"/></svg><svg width="14" height="14" viewBox="0 0 14 14"><polygon points="1,4 8,1 13,3 6,6" fill="#fff2b0"/><polygon points="1,4 6,6 6,13 1,11" fill="#f4d050"/><polygon points="6,6 13,3 13,10 6,13" fill="#b07c20"/></svg><span class="mdl">model1</span></div>
    </div>
    <div class="tir d-flex align-items-start">
     <svg width="16" height="16" viewBox="0 0 16 16" fill="none" stroke="#444"><path d="M.5.5h12l3 3v12H.5zM4 .5v4h7v-4M3 15.500V9h10v6.500M5 11h6M5 13h6"/></svg>
     <svg width="16" height="15" viewBox="0 0 16 15"><rect x=".5" y="2.500" width="13" height="10" fill="none" stroke="#444"/><text x="1.500" y="11" font-size="9" font-family="Liberation Sans" fill="#333">ab</text><path d="M12 1h3M13.500 1v13M12 14h3" stroke="#444" fill="none"/></svg>
    </div>
   </div>
   <div class="hsb"></div>
  </div>
  <div class="spl"></div>
  <div class="sct d-flex align-items-center"><i></i><span>预览</span></div><div class="sln"></div>
  <div class="sct d-flex align-items-center"><i></i><span>相关性</span></div><div class="sln"></div>
 </div>

 <div class="vwp d-flex flex-column">
  <div class="vtb d-flex">
   <div class="vtab d-flex align-items-center">
    <svg width="18" height="16" viewBox="0 0 26 24" class="ms-1 me-1"><path d="M2 16q-2-8 4-12q5-4 7-2l2 9 8 4-1 4q-8 5-17 1z" fill="#aaa" stroke="#ddd"/><ellipse cx="13" cy="17" rx="10" ry="4.500" fill="#ddd" stroke="#555"/><ellipse cx="13" cy="16" rx="3.500" ry="2" fill="#777"/></svg>
    <span>model1.prt</span>
    <svg width="10" height="11" viewBox="0 0 10 11" fill="none" stroke="#fff" class="ms-1"><path d="M6 .5H.5v10h8V4M4 7l5-5"/></svg>
    <svg width="9" height="9" viewBox="0 0 9 9" stroke="#fff" stroke-width="2" class="ms-2"><path d="M1 1l7 7M8 1L1 8"/></svg>
   </div>
  </div>
  <svg class="cvs" width="1476" height="805" viewBox="444 205 1476 805">
   <!-- solid -->
   <polygon points="978,436 1148,465 1144,556 1243,573 1236,709 968,664" fill="#7b8182"/>
   <polygon points="978,436 913,585 903,814 968,664" fill="#7b8182"/>
   <polygon points="968,664 1236,709 1172,858 903,814" fill="#8f9698"/>
   <g fill="none" stroke="#2f3333" stroke-width=".9">
    <path d="M978 436L1148 465L1144 556L1243 573L1236 709L1172 858L903 814L968 664L978 436"/>
    <path d="M968 664L1236 709"/>
    <path d="M978 436L913 585L903 814" stroke-width="1.300" stroke-dasharray="5 1"/>
   </g>
   <g fill="none" stroke="#c7cbcb" stroke-width=".9" stroke-dasharray="12 7">
    <path d="M913 585L1082 613"/>
    <path d="M1144 478L1090 597"/>
    <path d="M1140 567L1087 686"/>
    <path d="M1241 584L1183 720"/>
    <path d="M1177 724L1172 858"/>
   </g>
   <g fill="none" stroke-width="1.500">
    <path d="M1148 495L1258 513L1249 734L1228 730" stroke="#3d63f2"/>
    <path d="M1148 495L1089 485L1079 705L1228 730" stroke="#e4e6e6"/>
   </g>
   <!-- triad -->
   <path d="M537 869L577 875L575 910L566 933L525 926L527 890zM537 869L535 904L575 910M527 890L525 926M535 904L525 926" fill="none" stroke="#cfcfcf"/>
   <path d="M557 890L563 873" stroke="#0b2fa8" stroke-width="6" stroke-linecap="round"/>
   <path d="M558 872l11-10 1 12-5 4z" fill="#0b2fa8"/>
   <path d="M577 905L604 910" stroke="#2e9a3a" stroke-width="4"/>
   <path d="M603 904L621 913L603 916z" fill="#2e8f38"/>
   <path d="M550 918L550 944" stroke="#e2444a" stroke-width="5" stroke-linecap="round"/>
   <path d="M544 944h12l-7 18z" fill="#e2444a"/>
   <g font-family="Liberation Sans" font-size="10">
    <text x="567" y="861" fill="#2f50e8">Z</text>
    <text x="627" y="917" fill="#5cac62">Y</text>
    <text x="544" y="973" fill="#d8505a">X</text>
   </g>
  </svg>
 </div>
</main>

<footer class="stbar d-flex align-items-center justify-content-center">部件文件已保存</footer>
<div class="btl"></div>

<!-- ink mark, behind recorder -->
<svg class="ink" width="76" height="72" viewBox="0 0 76 72">
 <path d="M8 30q2-14 18-22q-9 8-10 22z" fill="#111"/>
 <path d="M12 28q4-10 16-16" fill="none" stroke="#111" stroke-width="2"/>
 <path d="M55 14q5 6 5 16" fill="none" stroke="#111" stroke-width="2"/>
 <path d="M42 24l2-4" stroke="#111" stroke-width="2"/>
 <text x="20" y="27" font-family="Liberation Sans" font-weight="700" font-size="14" fill="#111">CN</text>
 <path d="M18 62q18 14 44 0v10H18z" fill="#111"/>
</svg>

<!-- recorder bar -->
<div class="rec d-flex align-items-center">
 <div class="cl wd13 rbs"></div><div class="cl wd4"></div>
 <div class="cl wd50 justify-content-start">00:00</div>
 <div class="cl wd49 justify-content-start">24FPS</div>
 <div class="cl wd31 rhl"><svg width="12" height="12"><rect width="12" height="12" rx="1" fill="#e8453c"/></svg></div>
 <div class="cl wd7"></div>
 <div class="cl wd18"><svg width="18" height="18" viewBox="0 0 18 18" fill="none" stroke="#e03030" stroke-width="1.300"><circle cx="9" cy="9" r="8.200"/><path d="M7 6v6M11 6v6" stroke-width="1.500"/></svg></div>
 <div class="cl wd21"></div>
 <div class="cl wd31"><svg width="18" height="18" viewBox="0 0 18 18" fill="none" stroke="#fff" stroke-width="1.300"><path d="M9 6V1H1v11h4"/><circle cx="11" cy="12" r="5.500"/></svg></div>
 <div class="cl wd31"><svg width="18" height="18" viewBox="0 0 18 18" fill="none" stroke="#fff" stroke-width="1.400"><path d="M3 16L3 3L10 13L15 7"/><circle cx="3" cy="3" r="1.800" fill="#fff"/><circle cx="3" cy="16" r="1.500" fill="#fff"/><circle cx="10" cy="13" r="1.500" fill="#fff"/><circle cx="15" cy="15" r="1.500" fill="#fff"/></svg></div>
 <div class="cl wd31"><svg width="16" height="16" viewBox="0 0 16 16" fill="none" stroke="#fff" stroke-width="1.300"><path d="M1 15L14 2M6 2h8v8"/></svg></div>
 <div class="cl wd31"><svg width="18" height="18" viewBox="0 0 18 18"><circle cx="9" cy="9" r="8.200" fill="none" stroke="#fff" stroke-width="1.200"/><text x="9" y="13" font-size="11" text-anchor="middle" fill="#fff" font-family="Liberation Sans">1</text></svg></div>
 <div class="cl wd31"><svg width="17" height="17" viewBox="0 0 17 17" fill="#fff" stroke="#fff"><path d="M1 16l1-4L12 2l3 3L5 15z" fill="none" stroke-width="1.200"/><path d="M4 11l8-8M6 13l8-8" stroke-width=".7"/></svg></div>
 <div class="cl wd31"><svg width="16" height="18" viewBox="0 0 16 18" fill="none" stroke="#fff" stroke-width="1.200"><path d="M0 1h16M8 1v16"/></svg></div>
 <div class="cl wd31"><svg width="18" height="16" viewBox="0 0 18 16" fill="none" stroke="#fff" stroke-width="1.200"><path d="M1 10l8-9 7 5-8 9H4zM6 5l6 5M2 15h14"/></svg></div>
 <div class="cl wd37"><svg width="16" height="20" viewBox="0 0 16 20" fill="none" stroke="#fff" stroke-width="1.300"><path d="M3 7h10l-3 5v7H6v-7z"/><path d="M8 0v3M2 1l1.500 3M14 1l-1.500 3"/></svg></div>
 <div class="cl wd11"><svg width="4" height="16" viewBox="0 0 4 16" fill="#aaa"><circle cx="2" cy="2" r="1.800"/><circle cx="2" cy="8" r="1.800"/><circle cx="2" cy="14" r="1.800"/></svg></div>
 <div class="cl wd16"></div>
 <div class="cl wd32"><svg width="16" height="17" viewBox="0 0 16 17" fill="none" stroke="#777" stroke-width="1.400"><path d="M4 5a7 7 0 1 1-1 7M4 1v5h5"/></svg></div>
 <div class="cl wd32"><svg width="16" height="17" viewBox="0 0 16 17" fill="none" stroke="#777" stroke-width="1.400"><path d="M12 5a7 7 0 1 0 1 7M12 1v5H7"/></svg></div>
 <div class="cl wd12"></div>
 <div class="cl wd32"><svg width="20" height="22" viewBox="0 0 20 22" fill="none" stroke="#fff" stroke-width="1.300"><path d="M10 1v20M1 11h18M7 4l3-3 3 3M7 18l3 3 3-3M4 8l-3 3 3 3M16 8l3 3-3 3"/></svg></div>
 <div class="cl wd34"><svg width="18" height="20" viewBox="0 0 18 20"><path d="M3 8l12 12M15 8L3 20" stroke="#f0e0c8" stroke-width="1.300"/><circle cx="11" cy="4" r="4" fill="#e87818"/></svg></div>
 <div class="cl wd30"><svg width="20" height="20" viewBox="0 0 20 20" fill="none" stroke="#c42020" stroke-width="1.600"><path d="M3 7a8 8 0 0 1 14 3M17 12a8 8 0 0 1-9 6" stroke-dasharray="6 1.500"/><path d="M2 3v5h5M9 7l4 3-5 2z" fill="#c42020"/></svg></div>
</div>
<svg class="cur" width="12" height="20" viewBox="0 0 12 20"><path d="M1 1v15l4-3 2.500 6 2.500-1-2.500-6H11z" fill="#fff" stroke="#111"/></svg>
</div>
</body>
</html>
